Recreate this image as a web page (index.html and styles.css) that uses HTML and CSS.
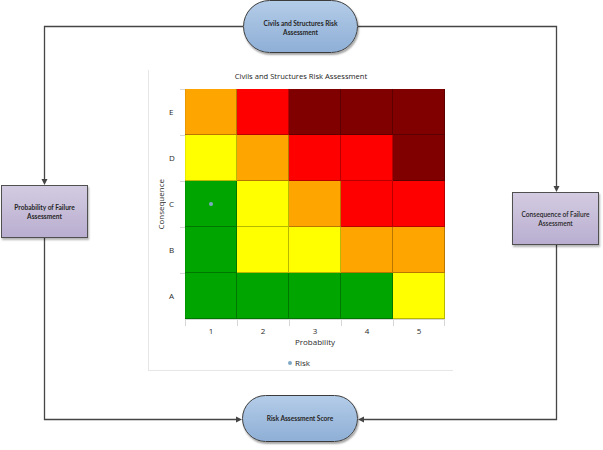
FILE: index.html
```html
<!DOCTYPE html>
<html lang="en">
<head>
<meta charset="utf-8">
<title>Civils and Structures Risk Assessment</title>
<link rel="stylesheet" href="styles.css">
</head>
<body>
<div class="canvas">
  <svg class="wires" width="603" height="450" viewBox="0 0 603 450">
    <g fill="none" stroke="#454545" stroke-width="1.3">
      <polyline points="243,26.5 44.5,26.5 44.5,180"/>
      <polyline points="358,26.5 556.5,26.5 556.5,187"/>
      <polyline points="44.5,238 44.5,419.5 237,419.5"/>
      <polyline points="556.5,245 556.5,419.5 363,419.5"/>
    </g>
    <g fill="#454545">
      <polygon points="41.5,179 47.5,179 44.5,185"/>
      <polygon points="553.5,186 559.5,186 556.5,192"/>
      <polygon points="236,416.5 236,422.5 242,419.5"/>
      <polygon points="364,416.5 364,422.5 358,419.5"/>
    </g>
  </svg>

  <div class="node pill pill-top">Civils and Structures Risk<br>Assessment</div>
  <div class="node box box-left">Probability of Failure<br>Assessment</div>
  <div class="node box box-right">Consequence of Failure<br>Assessment</div>
  <div class="node pill pill-bottom">Risk Assessment Score</div>

  <div class="chart">
    <div class="chart-title">Civils and Structures Risk Assessment</div>
    <div class="plot">
      <div class="y-title"><span>Consequence</span></div>
      <div class="y-ticks">
        <div>E</div><div>D</div><div>C</div><div>B</div><div>A</div>
      </div>
      <div class="matrix">
        <div class="c o"></div><div class="c r"></div><div class="c m"></div><div class="c m"></div><div class="c m"></div>
        <div class="c y"></div><div class="c o"></div><div class="c r"></div><div class="c r"></div><div class="c m"></div>
        <div class="c g"><span class="dot"></span></div><div class="c y"></div><div class="c o"></div><div class="c r"></div><div class="c r"></div>
        <div class="c g"></div><div class="c y"></div><div class="c y"></div><div class="c o"></div><div class="c o"></div>
        <div class="c g"></div><div class="c g"></div><div class="c g"></div><div class="c g"></div><div class="c y"></div>
      </div>
      <div class="x-ticks">
        <div>1</div><div>2</div><div>3</div><div>4</div><div class="last">5</div>
      </div>
      <div class="x-title">Probability</div>
    </div>
    <div class="legend"><span class="dot"></span>Risk</div>
  </div>
</div>
</body>
</html>
```

FILE: styles.css
```css
html, body {
  margin: 0;
  padding: 0;
  background: #ffffff;
}

.canvas {
  position: relative;
  width: 603px;
  height: 450px;
  overflow: hidden;
  font-family: "Open Sans", "Noto Sans", sans-serif;
  color: #2a2a2a;
}

.wires {
  position: absolute;
  left: 0;
  top: 0;
}

.node {
  position: absolute;
  display: flex;
  align-items: center;
  justify-content: center;
  text-align: center;
  box-sizing: border-box;
  font-family: "Lato", "Open Sans", sans-serif;
  font-weight: 700;
  font-size: 6.6px;
  line-height: 9px;
  color: #262626;
}

.pill {
  border: 1px solid #3c3c3c;
  border-radius: 27px;
  background: linear-gradient(#b3cce8, #8fafd6);
  box-shadow: 1px 2px 2px rgba(0, 0, 0, 0.35);
}

.pill-top {
  left: 243px;
  top: 0;
  width: 115px;
  height: 53px;
  padding-top: 2px;
}

.pill-bottom {
  left: 242px;
  top: 395px;
  width: 116px;
  height: 47px;
}

.box {
  border: 1px solid #505050;
  background: linear-gradient(#d3cbe1, #b9aed0);
  box-shadow: 1px 2px 2px rgba(0, 0, 0, 0.3);
}

.box-left {
  left: 1px;
  top: 185px;
  width: 87px;
  height: 53px;
}

.box-right {
  left: 512px;
  top: 192px;
  width: 87px;
  height: 53px;
  font-weight: 600;
}

/* chart */
.chart {
  position: absolute;
  left: 148px;
  top: 70px;
  width: 305px;
  height: 301px;
  box-sizing: border-box;
  border-left: 1px solid #e6e6e6;
  border-bottom: 1px solid #e6e6e6;
  display: flex;
  flex-direction: column;
  font-size: 8px;
}

.chart-title {
  height: 12px;
  line-height: 12px;
  text-align: center;
  font-size: 7.6px;
  color: #222222;
}

.plot {
  margin-top: 7px;
  display: grid;
  grid-template-columns: 20px 16px 260px;
  grid-template-rows: 231px auto auto;
}

.y-title {
  grid-column: 1;
  grid-row: 1;
  display: flex;
  align-items: center;
  justify-content: center;
  padding-left: 4px;
}

.y-title span {
  writing-mode: vertical-rl;
  transform: rotate(180deg);
  line-height: 10px;
}

.y-ticks {
  grid-column: 2;
  grid-row: 1;
  display: grid;
  grid-template-rows: repeat(5, 46px);
}

.y-ticks div {
  display: flex;
  align-items: center;
  padding-left: 0;
  line-height: 10px;
  background: linear-gradient(#d6d6d6, #d6d6d6) right top / 5px 1px no-repeat;
}

.matrix {
  grid-column: 3;
  grid-row: 1;
  display: grid;
  grid-template-columns: repeat(5, 52px);
  grid-template-rows: repeat(5, 46px);
  box-shadow: inset 0 1px 0 rgba(0, 0, 0, 0.3);
  border-bottom: 1px solid #d6d6d6;
  margin-right: -6px;
  width: 260px;
}

.c {
  box-shadow: inset -1px -1px 0 rgba(0, 0, 0, 0.28);
  display: flex;
  align-items: center;
  justify-content: center;
}

.c:nth-child(5n+1) {
  box-shadow: inset -1px -1px 0 rgba(0, 0, 0, 0.28), inset 1px 0 0 rgba(0, 0, 0, 0.08);
}

.o { background: #ffa500; }
.r { background: #ff0000; }
.m { background: #800000; }
.y { background: #ffff00; }
.g { background: #00a500; }

.dot {
  display: inline-block;
  width: 4px;
  height: 4px;
  border-radius: 50%;
  background: #7ea9c4;
}

.x-ticks {
  grid-column: 3;
  grid-row: 2;
  display: grid;
  grid-template-columns: repeat(5, 52px);
}

.x-ticks div {
  text-align: center;
  padding-top: 6px;
  line-height: 10px;
  background: linear-gradient(#d6d6d6, #d6d6d6) left top / 1px 6px no-repeat;
}

.x-ticks div.last {
  background:
    linear-gradient(#d6d6d6, #d6d6d6) left top / 1px 6px no-repeat,
    linear-gradient(#d6d6d6, #d6d6d6) right top / 1px 6px no-repeat;
}

.x-title {
  grid-column: 3;
  grid-row: 3;
  text-align: center;
  line-height: 12px;
}

.legend {
  margin-top: 9px;
  display: flex;
  align-items: center;
  justify-content: center;
  gap: 3px;
  line-height: 12px;
  padding-right: 4px;
}
```
